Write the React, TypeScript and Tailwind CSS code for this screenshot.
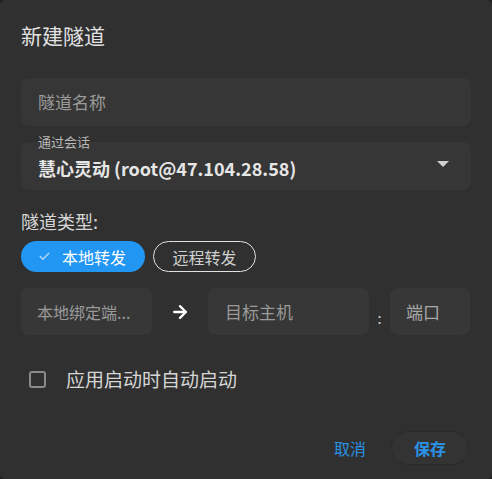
import React from 'react';
import { Check, ArrowRight } from 'lucide-react';

const font = { fontFamily: '"Noto Sans CJK SC", "Noto Sans", sans-serif' };

function Field({ placeholder, className }: { placeholder: string; className?: string }) {
  return (
    <div className={`h-[47px] rounded-[8px] bg-[#373737] flex items-center px-[17px] text-[17px] text-[#9a9a9a] whitespace-nowrap overflow-hidden ${className ?? ''}`}>
      {placeholder}
    </div>
  );
}

export default function App() {
  return (
    <div className="w-[492px] h-[479px] bg-[#1f1f1f]" style={font}>
      <div className="w-full h-full bg-[#303030] rounded-[5px] px-[21px] pt-[21px] flex flex-col">
        <h1 className="text-[21px] leading-[28px] text-[#e2e2e2]">新建隧道</h1>

        <div className="mt-[29px] h-[48px] rounded-[8px] bg-[#363636] flex items-center px-[17px] text-[17px] text-[#9a9a9a]">
          隧道名称
        </div>

        <div className="relative mt-[16px] h-[48px] rounded-[8px] bg-[#363636] flex items-center pl-[17px] pr-[22px]">
          <span className="absolute left-[17px] top-[-8px] text-[13px] leading-[16px] text-[#b8b8b8]">通过会话</span>
          <span className="mt-[4px] text-[18px] font-bold text-[#e6e6e6] flex-1">
            慧心灵动 (root@47.104.28.58)
          </span>
          <span className="mt-[-4px] w-0 h-0 border-l-[6px] border-r-[6px] border-t-[6px] border-l-transparent border-r-transparent border-t-[#d0d0d0]" />
        </div>

        <div className="mt-[19px] text-[18px] leading-[24px] text-[#d6d6d6]">隧道类型:</div>

        <div className="mt-[8px] flex gap-[8px]">
          <div className="h-[31px] w-[124px] rounded-full bg-[#2196f3] flex items-center pl-[17px] gap-[11px] text-[16px] text-white">
            <Check className="w-[13px] h-[13px] text-[#b5d9f8]" strokeWidth={2.5} />
            <span>本地转发</span>
          </div>
          <div className="h-[31px] w-[103px] rounded-full border border-[#e0e0e0] flex items-center justify-center text-[16px] text-[#cfcfcf]">
            远程转发
          </div>
        </div>

        <div className="mt-[16px] flex items-center">
          <Field placeholder="本地绑定端..." className="w-[131px] !px-[16px] !text-[16px]" />
          <div className="w-[56px] flex justify-center">
            <ArrowRight className="w-[20px] h-[20px] text-white" strokeWidth={2.75} />
          </div>
          <Field placeholder="目标主机" className="w-[161px]" />
          <div className="w-[21px] flex justify-center pt-[14px] text-[15px] text-[#d0d0d0]">:</div>
          <Field placeholder="端口" className="w-[80px] !px-[16px] !text-[#a8a8a8]" />
        </div>

        <label className="mt-[31px] flex items-center gap-[20px] pl-[8px]">
          <span className="w-[17px] h-[17px] rounded-[3px] border-2 border-[#8a8a8a]" />
          <span className="text-[19px] leading-[26px] text-[#d6d6d6]">应用启动时自动启动</span>
        </label>

        <div className="mt-auto mb-[15px] flex justify-end items-center gap-[26px] pr-[3px]">
          <button className="text-[16px] text-[#2a90e4]">取消</button>
          <button className="h-[32px] w-[76px] rounded-full bg-[#333333] shadow-[0_0_0_1px_#2b2b2b] text-[16px] font-bold text-[#2b93ea]">
            保存
          </button>
        </div>
      </div>
    </div>
  );
}
